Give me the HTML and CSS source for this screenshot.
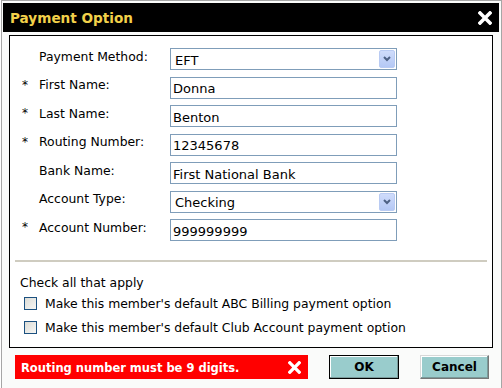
FILE: index.html
```html
<!DOCTYPE html>
<html>
<head>
<meta charset="utf-8">
<link rel="stylesheet" href="styles.css">
</head>
<body>
<div class="dialog">
  <div class="titlebar">
    <span class="title">Payment Option</span>
    <svg class="close" width="14" height="14" viewBox="0 0 14 14"><path d="M2 2 L12 12 M12 2 L2 12" stroke="#fff" stroke-width="3.6" stroke-linecap="square"/></svg>
  </div>
  <div class="panel">
    <div class="form">
      <span class="req"></span><label>Payment Method:</label>
      <div class="select"><span>EFT</span><span class="arrow"><svg width="8" height="6" viewBox="0 0 8 6"><path d="M1 1 L4 4 L7 1" fill="none" stroke="#4d6185" stroke-width="2"/></svg></span></div>

      <span class="req">*</span><label>First Name:</label>
      <div class="input">Donna</div>

      <span class="req">*</span><label>Last Name:</label>
      <div class="input">Benton</div>

      <span class="req">*</span><label>Routing Number:</label>
      <div class="input">12345678</div>

      <span class="req"></span><label>Bank Name:</label>
      <div class="input">First National Bank</div>

      <span class="req"></span><label>Account Type:</label>
      <div class="select"><span>Checking</span><span class="arrow"><svg width="8" height="6" viewBox="0 0 8 6"><path d="M1 1 L4 4 L7 1" fill="none" stroke="#4d6185" stroke-width="2"/></svg></span></div>

      <span class="req">*</span><label>Account Number:</label>
      <div class="input">999999999</div>
    </div>
    <div class="rule"></div>
    <div class="checks">
      <div class="checkhead">Check all that apply</div>
      <div class="check"><span class="box"></span>Make this member's default ABC Billing payment option</div>
      <div class="check"><span class="box"></span>Make this member's default Club Account payment option</div>
    </div>
  </div>
  <div class="footer">
    <div class="error"><span>Routing number must be 9 digits.</span>
      <svg width="13" height="13" viewBox="0 0 14 14"><path d="M2 2 L12 12 M12 2 L2 12" stroke="#fff" stroke-width="3.6" stroke-linecap="square"/></svg>
    </div>
    <button class="btn ok">OK</button>
    <button class="btn cancel">Cancel</button>
  </div>
</div>
</body>
</html>
```
FILE: styles.css
```css
html, body { margin: 0; padding: 0; background: #fff; }
body { font-family: "DejaVu Sans", Verdana, sans-serif; font-size: 12.4px; color: #000; }
.dialog {
  position: relative;
  margin-left: 1px;
  width: 498px;
  height: 385px;
  border: 1px solid #a6a6a6;
  background: #fafbfa;
  padding: 2px 0 0 1px;
  box-sizing: content-box;
}
.titlebar {
  background: #000;
  height: 29px;
  width: 496px;
  display: flex;
  align-items: center;
  justify-content: space-between;
  padding: 0 6px 0 7px;
  box-sizing: border-box;
}
.title { color: #f2d14a; font-weight: bold; font-size: 13.6px; }
.close { margin-right: 1px; }
.panel {
  margin: 3px 0 0 6px;
  width: 484px;
  height: 313px;
  box-sizing: border-box;
  border: 1px solid #000;
  background: #fff;
  padding-top: 12px;
}
.form {
  display: grid;
  grid-template-columns: 18px 131px 227px;
  grid-auto-rows: 22px;
  row-gap: 6.5px;
  padding-left: 11px;
  align-items: center;
}
.req { font-size: 12px; padding-left: 1px; margin-top: -6px; }
.form label { align-self: center; margin-top: -6px; }
.input, .select {
  height: 22px;
  box-sizing: border-box;
  border: 1px solid #7f9db9;
  background: #fff;
  display: flex;
  align-items: center;
  font-size: 13px;
  padding-left: 2px;
  padding-top: 2px;
}
.select { justify-content: space-between; padding-left: 4px; padding-right: 1px; padding-top: 0; }
.select span:first-child { padding-top: 2px; }
.arrow {
  width: 16px; height: 18px;
  background: linear-gradient(#cfdcfb, #b4c8f5);
  border-radius: 2px;
  border: 1px solid #b9cbf3;
  box-sizing: border-box;
  display: flex; align-items: center; justify-content: center;
}
.rule { margin: 19px 5px 0 5px; height: 2px; background: #cfccc0; }
.checks { padding-left: 10px; }
.checkhead { margin-top: 13px; height: 16px; }
.check { display: flex; align-items: center; height: 24px; }
.box {
  width: 11px; height: 11px;
  border: 1px solid #1c5180;
  background: linear-gradient(135deg, #dcdcd6, #f6f6f4);
  margin: 0 8px 0 4px;
}
.footer {
  display: flex;
  align-items: flex-start;
  padding: 7px 0 0 12px;
}
.error {
  width: 293px; height: 24px;
  background: #ff0000;
  color: #fff;
  font-weight: bold;
  font-size: 11.5px;
  display: flex; align-items: center; justify-content: space-between;
  padding: 2px 6px 0 6px;
  box-sizing: border-box;
}
.error svg { margin-right: 1px; margin-top: -2px; }
.btn {
  font-family: "DejaVu Sans", Verdana, sans-serif;
  font-weight: bold;
  font-size: 12px;
  height: 24px;
  background: #99cccc;
  border: 1px solid #000;
  box-shadow: inset -1px -1px 0 #7a9a9a, inset 1px 1px 0 #fff;
  padding: 0;
  color: #000;
}
.ok { width: 70px; margin-left: 21px; }
.cancel { width: 69px; margin-left: 21px; border-color: #d8d8d8 #777 #777 #d8d8d8; }
```
